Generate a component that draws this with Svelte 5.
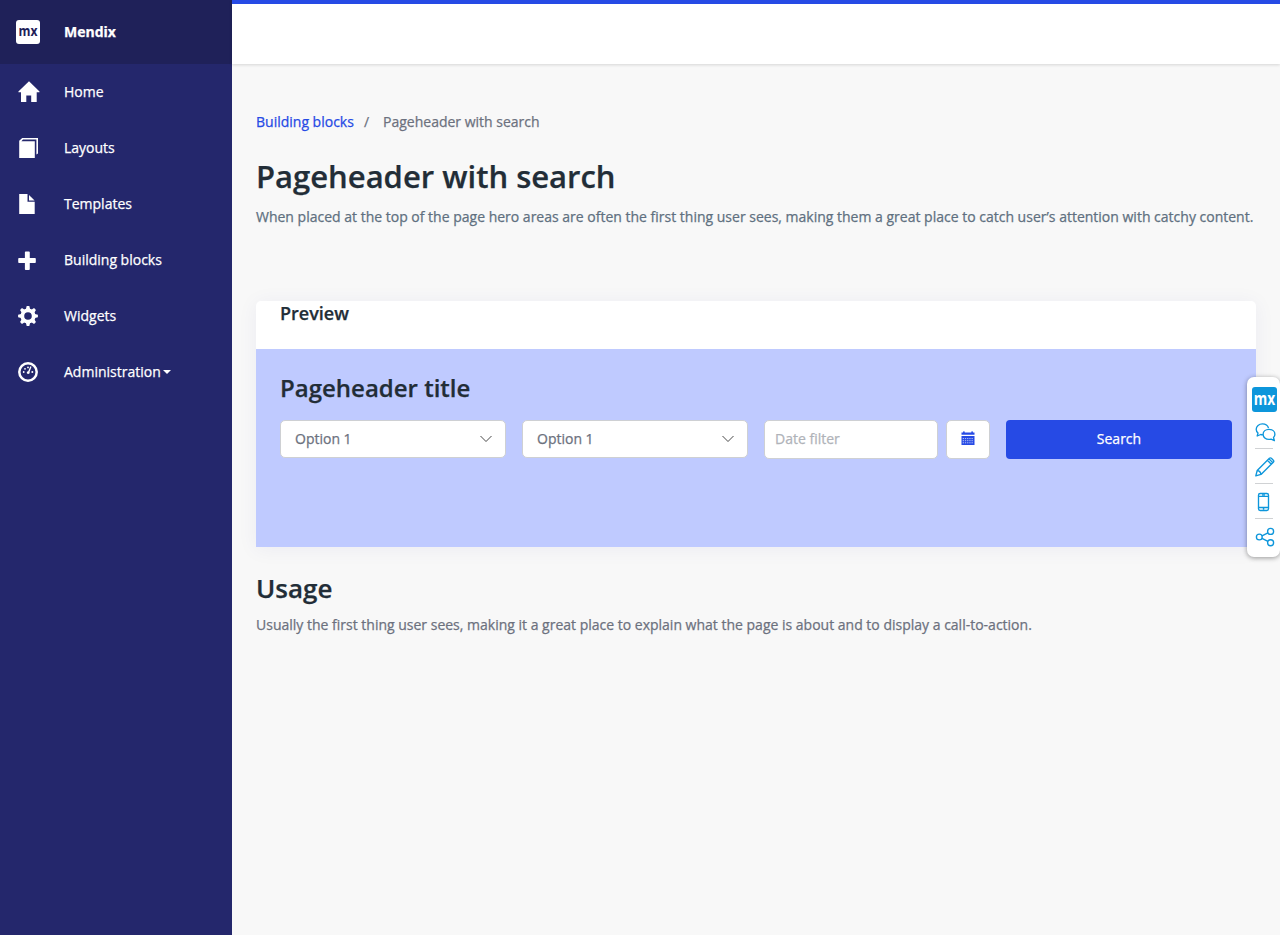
<script>
  const nav = [
    { icon: 'home', label: 'Home' },
    { icon: 'layouts', label: 'Layouts' },
    { icon: 'file', label: 'Templates' },
    { icon: 'plus', label: 'Building blocks' },
    { icon: 'gear', label: 'Widgets' },
    { icon: 'dash', label: 'Administration', caret: true }
  ];
  const teeth = [0, 45, 90, 135, 180, 225, 270, 315];
</script>

<div class="page">
  <aside>
    <div class="brand">
      <svg width="24" height="24" viewBox="0 0 24 24">
        <rect width="24" height="24" rx="3" fill="#fff" />
        <text x="2.6" y="16" textLength="19" lengthAdjust="spacingAndGlyphs" fill="#1f2159" class="mx">mx</text>
      </svg>
      <span>Mendix</span>
    </div>
    <nav>
      {#each nav as item}
        <a href="#top">
          <svg width="24" height="24" viewBox="0 0 24 24" fill="#fff">
            {#if item.icon === 'home'}
              <path d="M13 1.3 2.4 11.6V12.3H5V22h5.3v-6.5h4.9V22h5.5v-9.7h2.8v-.7z" />
            {:else if item.icon === 'layouts'}
              <path d="M6.2 2H22v15.4l-1.6 1.2V3.6H7L5.4 5.2h13.4V22H3.2V4.8z" />
            {:else if item.icon === 'file'}
              <path d="M3.2 2h8.3v7.8h7.2V22H3.2z" /><path d="M13 3 18.6 8.5H13z" />
            {:else if item.icon === 'plus'}
              <path d="M9.7 3.8q0-.8.8-.8h3.1q.8 0 .8.8v5.5h5q.8 0 .8.8v3.3q0 .8-.8.8h-5v5.9q0 .8-.8.8h-3.1q-.8 0-.8-.8v-5.9H4.1q-.8 0-.8-.8v-3.3q0-.8.8-.8h5.6z" transform="translate(-1.2 .3) scale(1.04)" />
            {:else if item.icon === 'gear'}
              <circle cx="12" cy="12" r="5.7" fill="none" stroke="#fff" stroke-width="3.8" />
              {#each teeth as angle}
                <path d="M9.9 5.2 10.7 2.1h2.6L14.1 5.2z" transform="rotate({angle} 12 12)" />
              {/each}
            {:else}
              <circle cx="12" cy="12" r="8.7" fill="none" stroke="#fff" stroke-width="2.5" />
              <path d="m14.4 6.2 1.1.5-2 5.2c.4.5.3 1.3-.2 1.7-.7.7-2 .5-2.4-.4-.3-.9.3-1.9 1.3-1.9z" />
              <circle cx="7.7" cy="12" r=".9" /><circle cx="9" cy="8.8" r=".9" />
              <circle cx="12" cy="7.4" r=".9" /><circle cx="16.3" cy="12" r="1" />
            {/if}
          </svg>
          <span>{item.label}</span>
          {#if item.caret}<i class="caret"></i>{/if}
        </a>
      {/each}
    </nav>
  </aside>

  <div class="content">
    <header></header>
    <main>
      <div class="crumbs"><a href="#top">Building blocks</a><span class="slash">/</span><span>Pageheader with search</span></div>
      <h1>Pageheader with search</h1>
      <p class="lead">When placed at the top of the page hero areas are often the first thing user sees, making them a great place to catch user’s attention with catchy content.</p>

      <section class="card">
        <h4>Preview</h4>
        <div class="hero">
          <h2>Pageheader title</h2>
          <div class="filters">
            {#each [1, 2] as n}
              <div class="box select">
                <span>Option 1</span>
                <svg width="12" height="8" viewBox="0 0 12 8"><path d="M.5 1 6 6.5 11.5 1" fill="none" stroke="#333" stroke-width=".9" /></svg>
              </div>
            {/each}
            <div class="date">
              <div class="box input">Date filter</div>
              <div class="box cal">
                <svg width="14" height="15" viewBox="0 0 14 15" fill="#264ae5">
                  <path d="M.5 1.6h1.6V.8q0-.6.8-.6t.8.6v.8h6.6V.8q0-.6.8-.6t.8.6v.8h1.6v2.2H.5zM.5 5h13v9H.5z" />
                  <path d="M1.7 7.6h10.8M1.7 9.7h10.8M1.7 11.8h10.8" stroke="#fff" stroke-opacity=".75" stroke-width=".9" stroke-dasharray="1.3 .9" />
                </svg>
              </div>
            </div>
            <button>Search</button>
          </div>
        </div>
      </section>

      <h2 class="usage">Usage</h2>
      <p>Usually the first thing user sees, making it a great place to explain what the page is about and to display a call-to-action.</p>
    </main>
  </div>

  <div class="dock">
    <svg class="logo" width="25" height="25" viewBox="0 0 25 25">
      <rect width="25" height="25" rx="3" fill="#0d96db" />
      <text x="1.8" y="17.7" textLength="21.4" lengthAdjust="spacingAndGlyphs" fill="#fff" class="mx big">mx</text>
    </svg>
    <div class="tool chat">
      <svg width="22" height="22" viewBox="0 0 22 22"><path d="M7.7 12.8q-1.1 0-2-.3L2.2 14l.8-2.9C1.8 10.1 1.2 8.7 1.2 7.3c0-3 2.8-5.4 6.2-5.4 3.1 0 5.5 1.8 6.1 4.2M14 7.3c3.3 0 5.9 2.1 5.9 4.9q0 2-1.4 3.3l.9 3.2-3.3-1.6q-1 .3-2.1.3c-3.3 0-5.9-2.3-5.9-5.2s2.6-4.9 5.9-4.9z" /></svg>
    </div>
    <div class="tool pencil">
      <svg width="22" height="22" viewBox="0 0 22 22"><path d="m.8 19.8 1.4-5.3L14.4 2.3q1-1 2 0l1.9 1.9q1 1 0 2L6 18.4zM2.2 14.5q3.2.4 3.8 3.9M12.4 4.3l3.9 3.9M13.9 2.8l3.9 3.9" /></svg>
    </div>
    <div class="tool phone">
      <svg width="22" height="22" viewBox="0 0 22 22"><rect x="3.5" y="2.5" width="10" height="17" rx="1.7" /><path d="M3.5 5.3h10M3.5 16.5h10M7 3.9h3M7.8 18H9.3" /></svg>
    </div>
    <div class="tool">
      <svg width="22" height="22" viewBox="0 0 22 22"><circle cx="4.3" cy="11" r="2.9" /><circle cx="15.6" cy="5.4" r="3" /><circle cx="15.6" cy="16.7" r="3" /><path d="m7 9.8 5.9-3M7 12.4l5.9 3" /></svg>
    </div>
  </div>
</div>

<style>
  :global(body) { margin: 0; }
  * { box-sizing: border-box; }
  .page {
    display: flex; height: 935px; overflow: hidden; position: relative;
    font: 14px/20px "Open Sans", sans-serif; color: #6c717e; background: #f8f8f8;
    -webkit-text-stroke: .25px currentColor;
  }
  a { color: #264ae5; text-decoration: none; }
  h1, h2, h4, p { margin: 0; }
  h1, h2, h4 { color: #222d37; font-weight: 600; }
  aside { width: 232px; flex: none; background: #24276c; color: #fff; }
  .brand { height: 64px; background: #1f2159; display: flex; align-items: center; padding-left: 16px; gap: 24px; font-weight: 700; }
  .brand svg { overflow: visible; }
  .mx { font: 700 15px "Open Sans", sans-serif; -webkit-text-stroke: .3px #1f2159; }
  .mx.big { font-size: 17.5px; -webkit-text-stroke: .3px #fff; }
  nav a { height: 56px; display: flex; align-items: center; padding-left: 16px; color: #fff; }
  nav svg { margin-right: 24px; }
  .caret { border: 4px solid transparent; border-top-color: #fff; border-bottom: 0; margin-left: 2px; }
  .content { flex: 1; min-width: 0; }
  header { height: 64px; background: #fff; border-top: 4px solid #264ae5; box-shadow: 0 1px 3px rgba(0,0,0,.14); }
  main { padding: 48px 24px 0; }
  .crumbs { display: flex; }
  .slash { margin: 0 14px 0 10px; }
  h1 { font-size: 31px; line-height: 40px; margin-top: 24px; }
  .lead { color: #607080; margin-top: 11px; white-space: nowrap; }
  .card { margin-top: 74px; height: 246px; background: #fff; border-radius: 5px 5px 0 0; box-shadow: 0 2px 20px 1px rgba(5,15,129,.05); }
  h4 { height: 48px; font-size: 18px; line-height: 25px; padding-left: 24px; }
  .hero { height: 198px; background: #bfcaff; padding: 23px 24px 0; }
  .hero h2 { font-size: 24px; line-height: 31px; }
  .filters { display: grid; grid-template-columns: repeat(4, 1fr); gap: 16px; margin-top: 17px; align-items: start; }
  .box { background: #fff; border: 1px solid #ced0d3; border-radius: 5px; height: 39px; display: flex; align-items: center; padding-bottom: 1px; }
  .select { height: 38px; justify-content: space-between; padding: 0 13px 0 14px; }
  .date { display: flex; gap: 8px; }
  .input { flex: 1; padding-left: 10px; color: #b0b3b9; }
  .cal { width: 44px; justify-content: center; padding: 0 1px 2px 0; }
  button { height: 39px; border: 0; border-radius: 4px; background: #264ae5; color: #fff; font: 14px/20px "Open Sans", sans-serif; padding: 0 0 2px; -webkit-text-stroke: .25px #fff; }
  .usage { font-size: 26px; line-height: 36px; margin: 23px 0 9px; }
  .dock { position: absolute; left: 1247px; top: 377px; width: 33px; height: 180px; padding: 10px 0 0 5px; background: #fff; border-radius: 7px; box-shadow: 0 1px 5px rgba(0,0,0,.4); }
  .logo { display: block; overflow: visible; }
  .tool { height: 35px; margin-left: 3px; border-bottom: 1px solid #d0d2d4; width: 18px; display: flex; align-items: center; }
  .chat { height: 37px; padding-top: 5px; }
  .chat svg { margin-left: -.5px; }
  .pencil, .phone { padding-top: 2px; }
  .tool:last-child { border: 0; }
  .tool svg { flex: none; fill: none; stroke: #0d96db; stroke-width: 1.35; stroke-linejoin: round; }
</style>
